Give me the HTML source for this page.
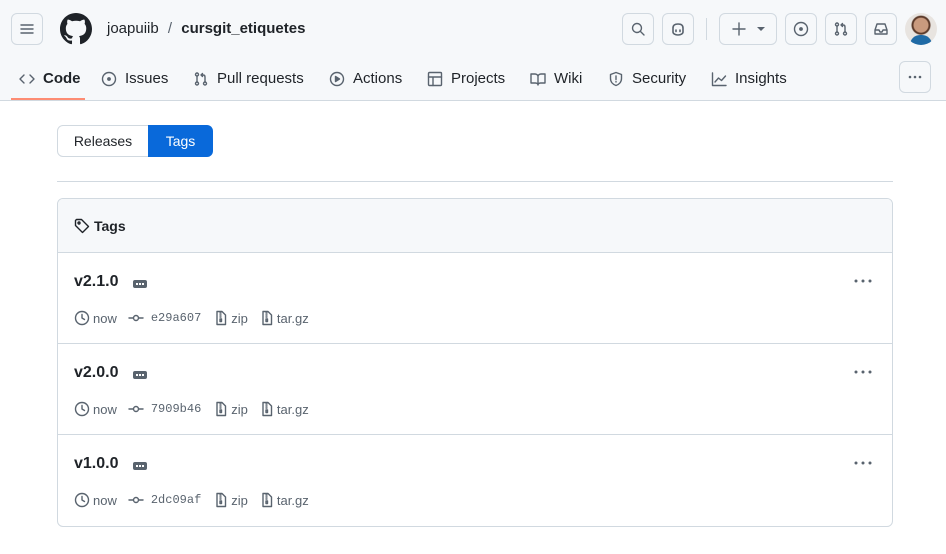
<!DOCTYPE html>
<html><head><style>
*{box-sizing:border-box;margin:0;padding:0}
body{width:946px;height:554px;background:#fff;font-family:"Liberation Sans",sans-serif;color:#1f2328;position:relative;overflow:hidden}
.hdr{position:absolute;left:0;top:0;width:946px;height:101px;background:#f6f8fa;border-bottom:1px solid #d1d9e0}
.btn{position:absolute;border:1px solid #d1d9e0;border-radius:6px;background:#f6f8fa;display:flex;align-items:center;justify-content:center}
svg{display:block}
.ab{position:absolute}
.tab{position:absolute;top:70px;font-size:15px;display:flex;align-items:center;gap:8px;color:#1f2328}
.ic{fill:none;stroke:#59636e;stroke-width:1.4;stroke-linecap:round;stroke-linejoin:round}
.meta{position:absolute;font-size:13px;color:#59636e;display:flex;align-items:center}
.mono{font-family:"Liberation Mono",monospace;font-size:12px}
.dots{position:absolute;width:14px;height:8px;background:#59636e;border-radius:2px}
.dots:after{content:"";position:absolute;left:3px;top:3px;width:2px;height:2px;background:#fff;box-shadow:3px 0 #fff,6px 0 #fff}
.kebab{position:absolute;left:854px;width:18px;height:4px}
</style></head><body>
<div class="hdr"></div>
<div class="btn" style="left:11px;top:13px;width:32px;height:32px"><svg width="16" height="16" class="ic"><path d="M2 4h12M2 8h12M2 12h12"/></svg></div>
<svg class="ab" style="left:60px;top:13px" width="32" height="32" viewBox="0 0 16 16"><path fill="#1f2328" d="M8 0C3.58 0 0 3.58 0 8c0 3.54 2.29 6.53 5.47 7.59.4.07.55-.17.55-.38 0-.19-.01-.82-.01-1.49-2.01.37-2.53-.49-2.69-.94-.09-.23-.48-.94-.82-1.13-.28-.15-.68-.52-.01-.53.63-.01 1.08.58 1.23.82.72 1.21 1.87.87 2.33.66.07-.52.28-.87.51-1.07-1.78-.2-3.64-.89-3.64-3.95 0-.87.31-1.59.82-2.15-.08-.2-.36-1.02.08-2.12 0 0 .67-.21 2.2.82.64-.18 1.32-.27 2-.27.68 0 1.36.09 2 .27 1.53-1.04 2.2-.82 2.2-.82.44 1.1.16 1.92.08 2.12.51.56.82 1.27.82 2.15 0 3.07-1.87 3.75-3.65 3.95.29.25.54.73.54 1.48 0 1.07-.01 1.93-.01 2.2 0 .21.15.46.55.38A8.013 8.013 0 0016 8c0-4.42-3.58-8-8-8z"/></svg>
<div class="ab" style="left:107px;top:20px;font-size:15px">joapuiib <span style="color:#59636e;margin:0 5px">/</span> <b>cursgit_etiquetes</b></div>
<div class="btn" style="left:622px;top:13px;width:32px;height:32px"><svg width="16" height="16" class="ic"><circle cx="7" cy="7" r="4.5"/><path d="M10.5 10.5l3.5 3.5"/></svg></div>
<div class="btn" style="left:662px;top:13px;width:32px;height:32px"><svg width="16" height="16" class="ic" style="stroke-width:1.6"><path d="M3 7c0-3 2-4 5-4s5 1 5 4v4c0 1.5-2 3-5 3s-5-1.5-5-3z"/><path d="M6 9v1.5M10 9v1.5"/></svg></div>
<div class="ab" style="left:706px;top:18px;width:1px;height:22px;background:#d1d9e0"></div>
<div class="btn" style="left:719px;top:13px;width:58px;height:32px;gap:10px"><svg width="16" height="16" class="ic"><path d="M8 2v12M2 8h12"/></svg><svg width="8" height="6"><path d="M0 1h8L4 5z" fill="#59636e"/></svg></div>
<div class="btn" style="left:785px;top:13px;width:32px;height:32px"><svg width="16" height="16" class="ic"><circle cx="8" cy="8" r="6.5"/><circle cx="8" cy="8" r="1.2" fill="#59636e"/></svg></div>
<div class="btn" style="left:825px;top:13px;width:32px;height:32px"><svg width="16" height="16" class="ic"><circle cx="4" cy="3.5" r="1.5"/><circle cx="4" cy="12.5" r="1.5"/><circle cx="12" cy="12.5" r="1.5"/><path d="M4 5v6M12 11V6c0-1-.5-2-2-2H8M9.5 2.5L8 4l1.5 1.5"/></svg></div>
<div class="btn" style="left:865px;top:13px;width:32px;height:32px"><svg width="16" height="16" class="ic"><path d="M2 9l2-6h8l2 6v4H2zM2 9h4l1 2h2l1-2h4"/></svg></div>
<div class="ab" style="left:905px;top:13px;width:32px;height:32px;border-radius:50%;background:radial-gradient(circle at 50% 38%,#c99a7e 0 7px,#5b3a2a 8px 9px,#e8e4e0 10px);overflow:hidden"><div style="position:absolute;left:5px;top:22px;width:22px;height:14px;border-radius:10px 10px 0 0;background:#1f6aa5"></div></div>

<div class="tab" style="left:19px"><svg width="16" height="16" class="ic"><path d="M5 4L1 8l4 4M11 4l4 4-4 4"/></svg><b>Code</b></div>
<div class="ab" style="left:11px;top:98px;width:74px;height:2px;background:#fd8c73"></div>
<div class="tab" style="left:101px"><svg width="16" height="16" class="ic"><circle cx="8" cy="8" r="6.5"/><circle cx="8" cy="8" r="1.2" fill="#59636e"/></svg>Issues</div>
<div class="tab" style="left:193px"><svg width="16" height="16" class="ic"><circle cx="4" cy="3.5" r="1.5"/><circle cx="4" cy="12.5" r="1.5"/><circle cx="12" cy="12.5" r="1.5"/><path d="M4 5v6M12 11V6c0-1-.5-2-2-2H8M9.5 2.5L8 4l1.5 1.5"/></svg>Pull requests</div>
<div class="tab" style="left:329px"><svg width="16" height="16" class="ic"><circle cx="8" cy="8" r="6.5"/><path d="M6.5 5.5v5l4-2.5z" fill="#59636e"/></svg>Actions</div>
<div class="tab" style="left:427px"><svg width="16" height="16" class="ic"><rect x="1.5" y="1.5" width="13" height="13" rx="1"/><path d="M1.5 6h13M6 6v8.5"/></svg>Projects</div>
<div class="tab" style="left:530px"><svg width="16" height="16" class="ic"><path d="M1 3h4c1.5 0 3 1 3 2.5V14c0-1-1-2-2.5-2H1zM15 3h-4C9.5 3 8 4 8 5.5V14c0-1 1-2 2.5-2H15z"/></svg>Wiki</div>
<div class="tab" style="left:608px"><svg width="16" height="16" class="ic"><path d="M8 1.5l5.5 2v4c0 3.5-2.5 6-5.5 7-3-1-5.5-3.5-5.5-7v-4z"/><path d="M8 5v3.5M8 10.5v.5"/></svg>Security</div>
<div class="tab" style="left:711px"><svg width="16" height="16" class="ic"><path d="M1.5 2v12.5H15M4 11l3.5-4 3 2.5L14.5 5"/></svg>Insights</div>
<div class="btn" style="left:899px;top:61px;width:32px;height:32px"><svg width="16" height="16"><circle cx="3" cy="8" r="1.3" fill="#59636e"/><circle cx="8" cy="8" r="1.3" fill="#59636e"/><circle cx="13" cy="8" r="1.3" fill="#59636e"/></svg></div>

<div class="ab" style="left:57px;top:125px;width:92px;height:32px;border:1px solid #d1d9e0;border-radius:6px 0 0 6px;font-size:14px;font-weight:500;display:flex;align-items:center;justify-content:center">Releases</div>
<div class="ab" style="left:148px;top:125px;width:65px;height:32px;background:#0969da;border-radius:0 6px 6px 0;color:#fff;font-size:14px;display:flex;align-items:center;justify-content:center">Tags</div>
<div class="ab" style="left:57px;top:181px;width:836px;height:1px;background:#d1d9e0"></div>

<div class="ab" style="left:57px;top:198px;width:836px;height:329px;border:1px solid #d1d9e0;border-radius:6px;overflow:hidden">
<div style="height:54px;background:#f6f8fa;border-bottom:1px solid #d1d9e0;display:flex;align-items:center;padding-left:16px;font-size:14px;font-weight:bold;gap:4px"><svg width="16" height="16" class="ic" style="stroke:#1f2328"><path d="M1.5 2.5v5l7 7 6-6-7-7h-5z"/><circle cx="5" cy="5" r="1"/></svg>Tags</div>
</div>
<div class="ab" style="left:58px;top:343px;width:834px;height:1px;background:#d1d9e0"></div>
<div class="ab" style="left:58px;top:434px;width:834px;height:1px;background:#d1d9e0"></div>

<div class="ab" style="left:74px;top:273px;font-size:16px;font-weight:bold">v2.1.0</div><div class="dots" style="left:133px;top:280px"></div>
<svg class="kebab" style="top:279px" viewBox="0 0 18 4"><circle cx="2" cy="2" r="1.5" fill="#59636e"/><circle cx="9" cy="2" r="1.5" fill="#59636e"/><circle cx="16" cy="2" r="1.5" fill="#59636e"/></svg>
<div class="meta" style="left:74px;top:310px"><svg width="16" height="16" class="ic"><circle cx="8" cy="8" r="6.5"/><path d="M8 4.5V8l2.5 1.5"/></svg><span style="margin-left:3px">now</span><svg style="margin-left:11px" width="16" height="16" class="ic"><circle cx="8" cy="8" r="2.5"/><path d="M1 8h4.5M10.5 8H15"/></svg><span class="mono" style="margin-left:7px">e29a607</span><svg style="margin-left:13px" width="14" height="16" class="ic"><path d="M3 1.5h5l3.5 3.5v9.5H3z"/><path d="M6 3h1M6 5h1M6 7h1M6 9v2.5h1.5V9z"/></svg><span style="margin-left:3px">zip</span><svg style="margin-left:12px" width="14" height="16" class="ic"><path d="M3 1.5h5l3.5 3.5v9.5H3z"/><path d="M6 3h1M6 5h1M6 7h1M6 9v2.5h1.5V9z"/></svg><span style="margin-left:3px">tar.gz</span></div>
<div class="ab" style="left:74px;top:364px;font-size:16px;font-weight:bold">v2.0.0</div><div class="dots" style="left:133px;top:371px"></div>
<svg class="kebab" style="top:370px" viewBox="0 0 18 4"><circle cx="2" cy="2" r="1.5" fill="#59636e"/><circle cx="9" cy="2" r="1.5" fill="#59636e"/><circle cx="16" cy="2" r="1.5" fill="#59636e"/></svg>
<div class="meta" style="left:74px;top:401px"><svg width="16" height="16" class="ic"><circle cx="8" cy="8" r="6.5"/><path d="M8 4.5V8l2.5 1.5"/></svg><span style="margin-left:3px">now</span><svg style="margin-left:11px" width="16" height="16" class="ic"><circle cx="8" cy="8" r="2.5"/><path d="M1 8h4.5M10.5 8H15"/></svg><span class="mono" style="margin-left:7px">7909b46</span><svg style="margin-left:13px" width="14" height="16" class="ic"><path d="M3 1.5h5l3.5 3.5v9.5H3z"/><path d="M6 3h1M6 5h1M6 7h1M6 9v2.5h1.5V9z"/></svg><span style="margin-left:3px">zip</span><svg style="margin-left:12px" width="14" height="16" class="ic"><path d="M3 1.5h5l3.5 3.5v9.5H3z"/><path d="M6 3h1M6 5h1M6 7h1M6 9v2.5h1.5V9z"/></svg><span style="margin-left:3px">tar.gz</span></div>
<div class="ab" style="left:74px;top:455px;font-size:16px;font-weight:bold">v1.0.0</div><div class="dots" style="left:133px;top:462px"></div>
<svg class="kebab" style="top:461px" viewBox="0 0 18 4"><circle cx="2" cy="2" r="1.5" fill="#59636e"/><circle cx="9" cy="2" r="1.5" fill="#59636e"/><circle cx="16" cy="2" r="1.5" fill="#59636e"/></svg>
<div class="meta" style="left:74px;top:492px"><svg width="16" height="16" class="ic"><circle cx="8" cy="8" r="6.5"/><path d="M8 4.5V8l2.5 1.5"/></svg><span style="margin-left:3px">now</span><svg style="margin-left:11px" width="16" height="16" class="ic"><circle cx="8" cy="8" r="2.5"/><path d="M1 8h4.5M10.5 8H15"/></svg><span class="mono" style="margin-left:7px">2dc09af</span><svg style="margin-left:13px" width="14" height="16" class="ic"><path d="M3 1.5h5l3.5 3.5v9.5H3z"/><path d="M6 3h1M6 5h1M6 7h1M6 9v2.5h1.5V9z"/></svg><span style="margin-left:3px">zip</span><svg style="margin-left:12px" width="14" height="16" class="ic"><path d="M3 1.5h5l3.5 3.5v9.5H3z"/><path d="M6 3h1M6 5h1M6 7h1M6 9v2.5h1.5V9z"/></svg><span style="margin-left:3px">tar.gz</span></div>
</body></html>
